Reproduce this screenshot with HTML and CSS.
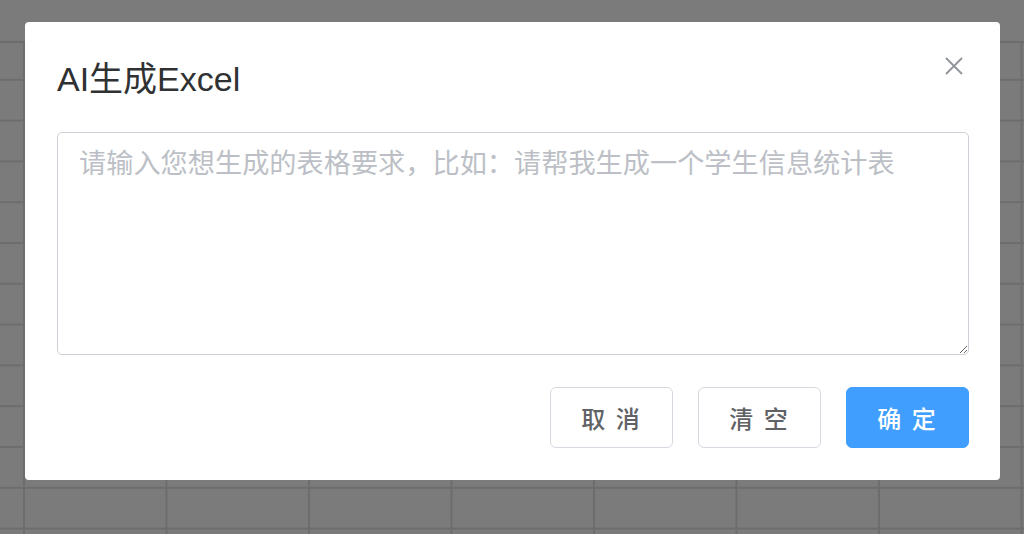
FILE: index.html
```html
<!DOCTYPE html>
<html lang="zh-CN">
<head>
  <meta charset="UTF-8">
  <meta name="viewport" content="width=device-width, initial-scale=1.0">
  <title>AI生成Excel</title>
  <link rel="stylesheet" href="styles.css">
</head>
<body>
  <div class="sheet"></div>
  <div class="mask">
    <div class="dialog">
      <div class="dialog__header">
        <span class="dialog__title">AI生成Excel</span>
        <button class="dialog__close" aria-label="关闭">
          <svg width="20" height="20" viewBox="0 0 20 20">
            <path d="M2 2 L18 18 M18 2 L2 18" stroke="#909399" stroke-width="1.8" fill="none"/>
          </svg>
        </button>
      </div>
      <textarea class="dialog__input" placeholder="请输入您想生成的表格要求，比如：请帮我生成一个学生信息统计表"></textarea>
      <div class="dialog__footer">
        <button class="btn">取 消</button>
        <button class="btn">清 空</button>
        <button class="btn btn--primary">确 定</button>
      </div>
    </div>
  </div>
</body>
</html>
```

FILE: styles.css
```css
* {
  box-sizing: border-box;
  font-family: 'Liberation Sans', 'Noto Sans CJK SC', sans-serif;
}
html, body {
  margin: 0;
  height: 100%;
  overflow: hidden;
}
body {
  background-color: #7b7b7b;
}
button {
  border: 0;
  background: none;
  outline: none;
  cursor: pointer;
}
.sheet {
  margin-top: 41px;
  height: calc(100% - 41px);
  border-top: 2px solid #6d6d6d;
  background-color: #7b7b7b;
  background-image:
    linear-gradient(to right, #6d6d6d 2px, transparent 2px),
    linear-gradient(to bottom, #6d6d6d 2px, transparent 2px);
  background-size: 142.5px 100%, 100% 40.8px;
  background-position: 23px 0, 0 -5px;
}
.mask {
  position: fixed;
  inset: 0;
  padding: 22px 0 0 25px;
}
.dialog {
  width: 975px;
  background: #fff;
  border-radius: 4px;
  padding: 0 31px 32px 32px;
  display: flex;
  flex-direction: column;
}
.dialog__header {
  height: 110px;
  display: flex;
  justify-content: space-between;
  align-items: flex-start;
}
.dialog__title {
  margin-top: 35px;
  font-size: 34px;
  line-height: 44px;
  color: #303133;
}
.dialog__close {
  margin: 34px 5px 0 0;
  padding: 0;
  width: 20px;
  height: 20px;
  display: flex;
}
.dialog__input {
  height: 223px;
  width: 100%;
  border: 1px solid #cdd0d6;
  border-radius: 5px;
  padding: 11px 21px;
  font-size: 27.2px;
  line-height: 1.5;
  color: #606266;
  resize: vertical;
  outline: none;
}
.dialog__input::placeholder {
  color: #bcbfc6;
}
.dialog__footer {
  margin-top: 32px;
  display: flex;
  justify-content: flex-end;
  gap: 25px;
}
.btn {
  width: 123px;
  height: 61px;
  border: 1px solid #d6d9df;
  border-radius: 6px;
  background: #fff;
  color: #606266;
  font-size: 24px;
  font-weight: 500;
  letter-spacing: 2px;
}
.btn--primary {
  background: #409eff;
  border-color: #409eff;
  color: #fff;
}
```
